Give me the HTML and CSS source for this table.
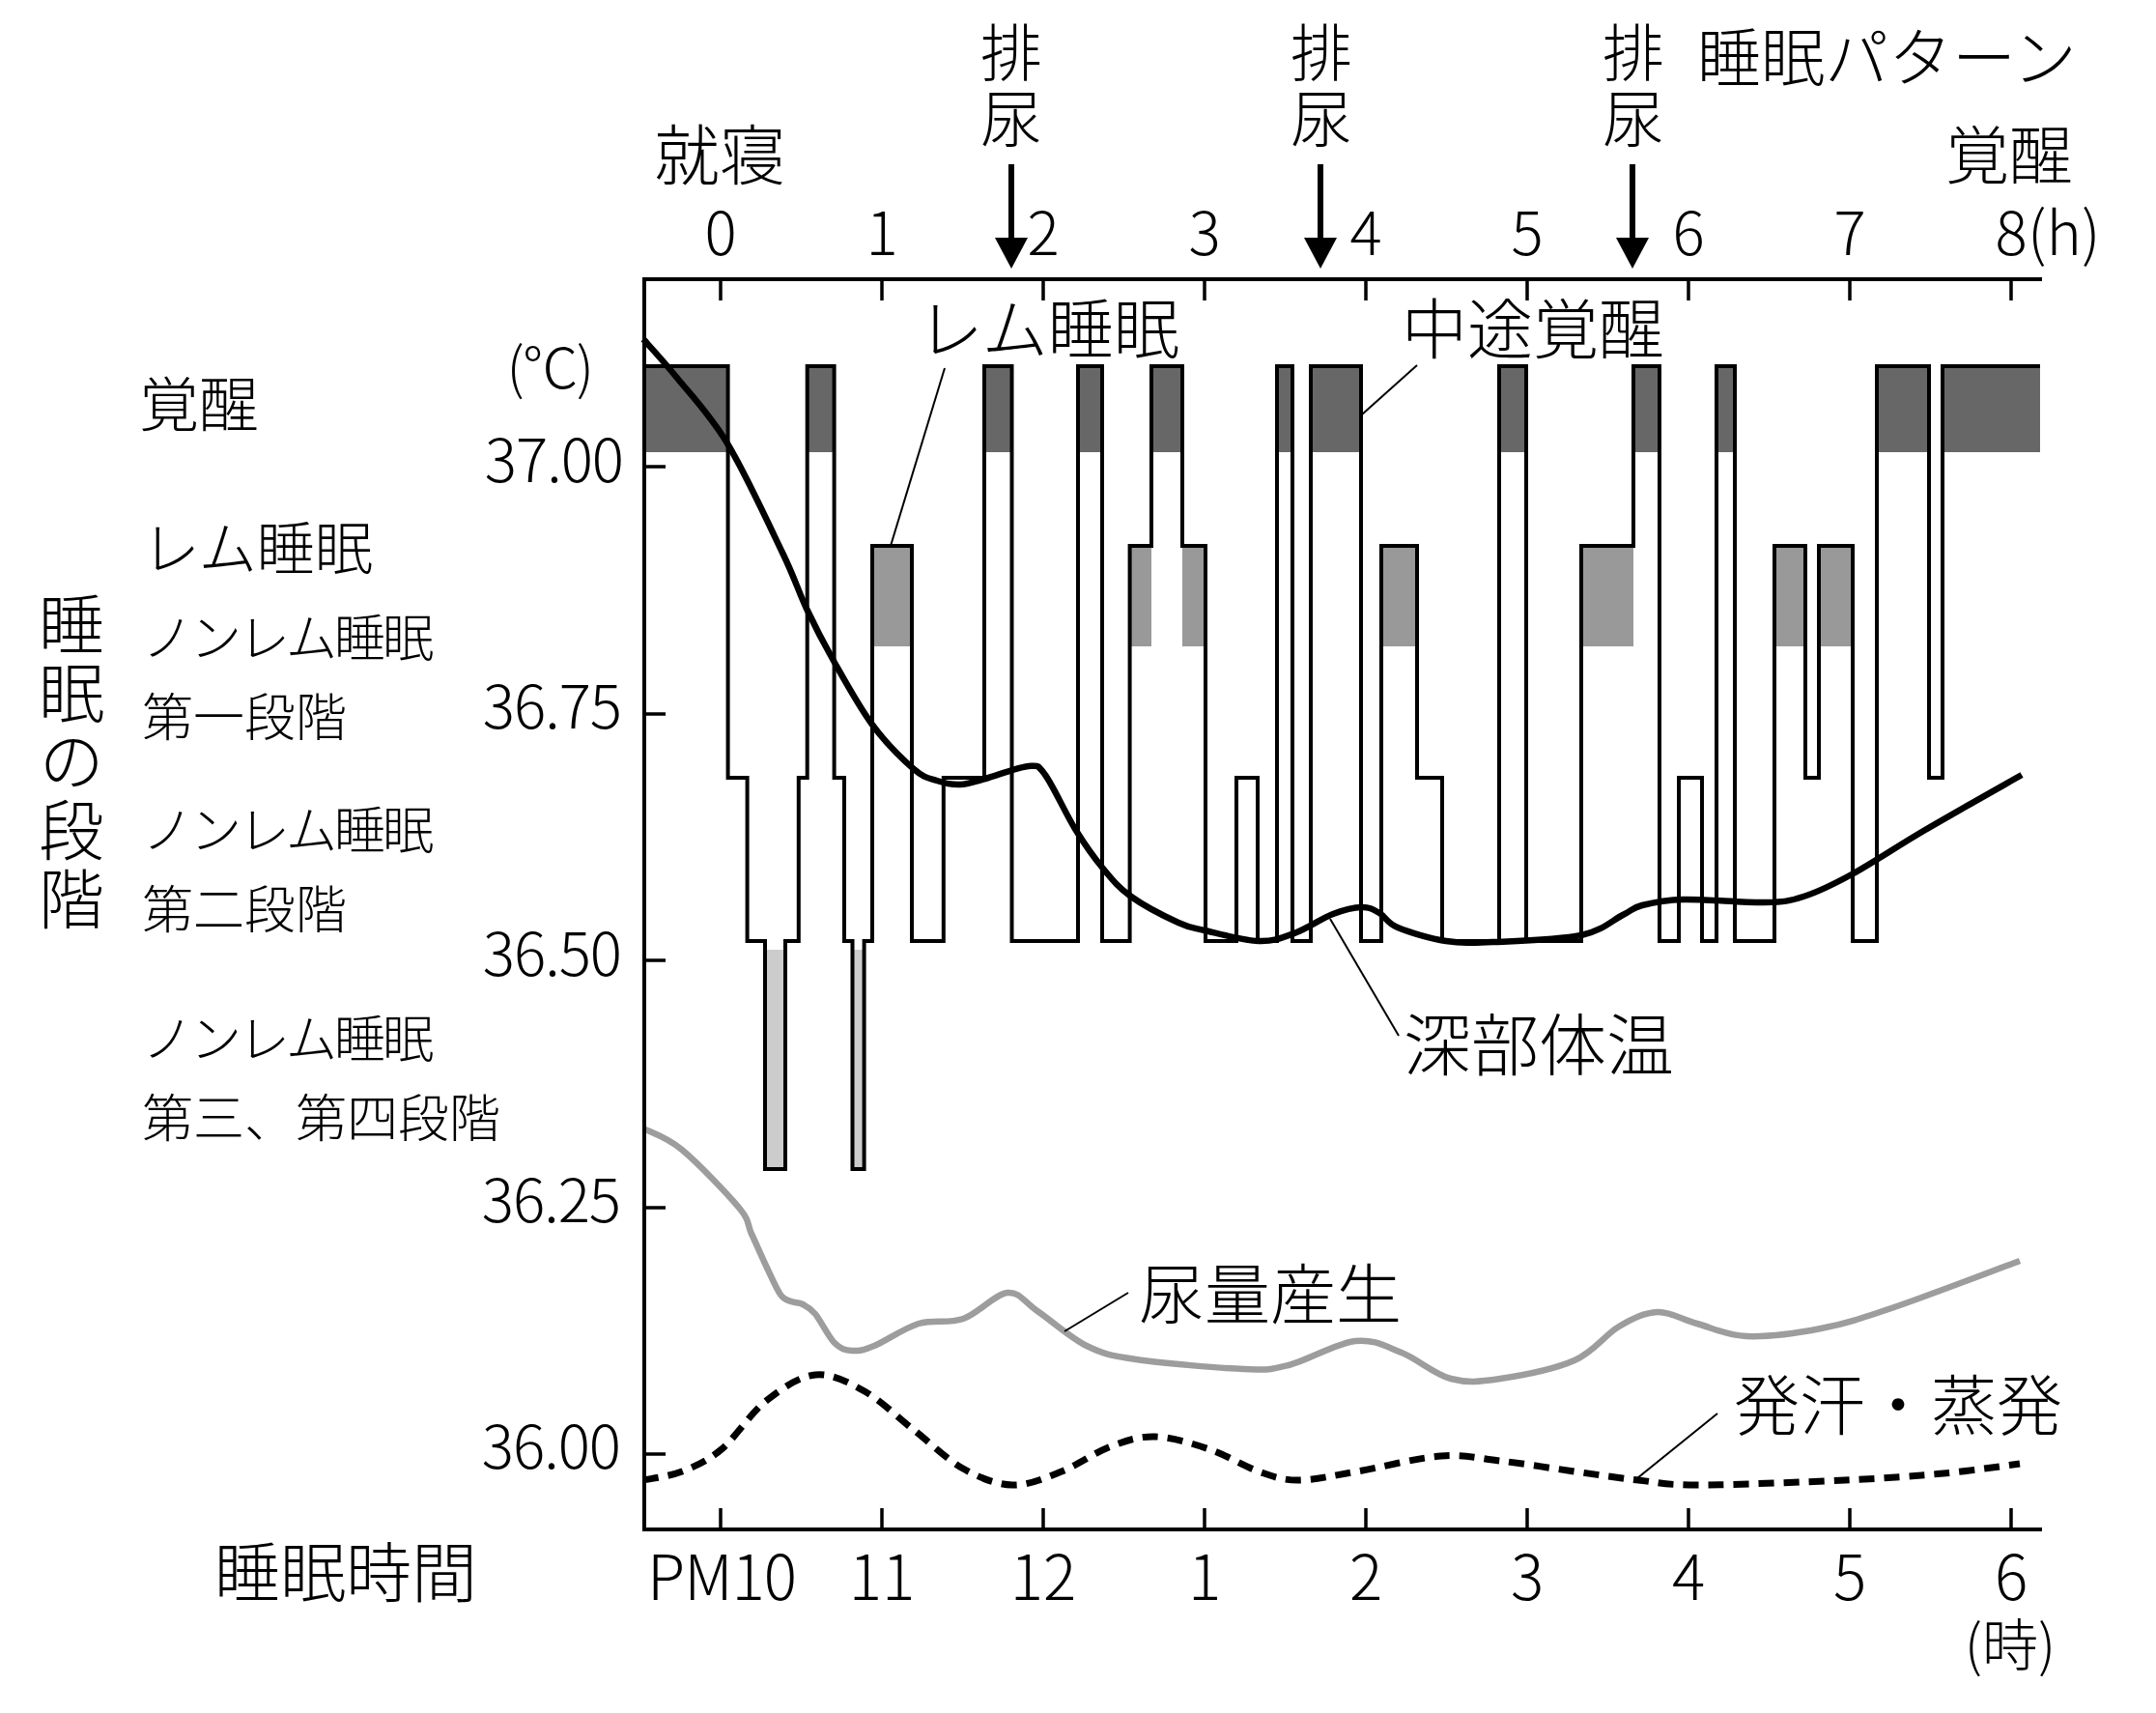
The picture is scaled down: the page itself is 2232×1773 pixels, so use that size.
FILE: index.html
```html
<!DOCTYPE html>
<html lang="ja">
<head>
<meta charset="utf-8">
<title>睡眠パターンと深部体温</title>
<link rel="stylesheet" href="styles.css">
</head>
<body>
<svg class="chart" viewBox="0 0 2232 1773" xmlns="http://www.w3.org/2000/svg">
  <!-- hypnogram fills (generated) -->
  <g id="hyp-fills"></g>
  <path id="hyp-line" class="hyp" d=""></path>

  <!-- curves -->
  <path id="c-urine" class="c-urine" d=""></path>
  <path id="c-sweat" class="c-sweat" d=""></path>
  <path id="c-temp" class="c-temp" d=""></path>

  <!-- axes -->
  <path class="axis" d="M667 1583 V289 H2112"></path>
  <path class="axis" d="M667 1583 H2112"></path>
  <g class="tick">
    <path d="M746 289 V311 M913 289 V311 M1080 289 V311 M1247 289 V311 M1414 289 V311 M1581 289 V311 M1748 289 V311 M1915 289 V311 M2082 289 V311"></path>
    <path d="M746 1583 V1561 M913 1583 V1561 M1080 1583 V1561 M1247 1583 V1561 M1414 1583 V1561 M1581 1583 V1561 M1748 1583 V1561 M1915 1583 V1561 M2082 1583 V1561"></path>
    <path d="M667 483 H689 M667 739 H689 M667 994 H689 M667 1250 H689 M667 1505 H689"></path>
  </g>

  <!-- leaders -->
  <g class="leader">
    <line x1="922" y1="565" x2="978" y2="381"></line>
    <line x1="1410" y1="429" x2="1467" y2="378"></line>
    <line x1="1377" y1="951" x2="1448" y2="1072"></line>
    <line x1="1102" y1="1378" x2="1168" y2="1338"></line>
    <line x1="1695" y1="1530" x2="1778" y2="1463"></line>
  </g>

  <!-- urination arrows -->
  <g>
    <line class="arrow-shaft" x1="1047" y1="170" x2="1047" y2="250"></line>
    <polygon class="arrow-head" points="1030,246 1064,246 1047,278"></polygon>
    <line class="arrow-shaft" x1="1367" y1="170" x2="1367" y2="250"></line>
    <polygon class="arrow-head" points="1350,246 1384,246 1367,278"></polygon>
    <line class="arrow-shaft" x1="1690" y1="170" x2="1690" y2="250"></line>
    <polygon class="arrow-head" points="1673,246 1707,246 1690,278"></polygon>
  </g>

  <!-- top labels -->
  <text class="lbl s64 vert2" x="1047" y="22">排尿</text>
  <text class="lbl s64 vert2" x="1368" y="22">排尿</text>
  <text class="lbl s64 vert2" x="1691" y="22">排尿</text>
  <text class="lbl s66" x="1757" y="84">睡眠パターン</text>
  <text class="lbl s68 mid" x="745" y="186">就寝</text>
  <text class="lbl s66" x="2014" y="185">覚醒</text>

  <text class="lbl s62 mid" x="746" y="264">0</text>
  <text class="lbl s62 mid" x="913" y="264">1</text>
  <text class="lbl s62 mid" x="1080" y="264">2</text>
  <text class="lbl s62 mid" x="1247" y="264">3</text>
  <text class="lbl s62 mid" x="1414" y="264">4</text>
  <text class="lbl s62 mid" x="1581" y="264">5</text>
  <text class="lbl s62 mid" x="1748" y="264">6</text>
  <text class="lbl s62 mid" x="1915" y="264">7</text>
  <text class="lbl s62 mid" x="2082" y="264">8</text>
  <text class="lbl s62" x="2099" y="264">(h)</text>

  <!-- in-plot labels -->
  <text class="lbl s68" x="950" y="366">レム睡眠</text>
  <text class="lbl s68" x="1451" y="366">中途覚醒</text>
  <text class="lbl s70" x="1453" y="1108">深部体温</text>
  <text class="lbl s68" x="1179" y="1365">尿量産生</text>
  <text class="lbl s68" x="1795" y="1480">発汗・蒸発</text>

  <!-- y axis labels -->
  <text class="lbl s58 end unit" x="613" y="402">(℃)</text>
  <text class="lbl s62 end num" x="645" y="499">37.00</text>
  <text class="lbl s62 end num" x="643" y="754">36.75</text>
  <text class="lbl s62 end num" x="643" y="1010">36.50</text>
  <text class="lbl s62 end num" x="642" y="1265">36.25</text>
  <text class="lbl s62 end num" x="642" y="1520">36.00</text>

  <!-- stage labels -->
  <text class="lbl s62" x="144" y="442">覚醒</text>
  <text class="lbl s60" x="147" y="590">レム睡眠</text>
  <text class="lbl s53 kana" x="147" y="680">ノンレム睡眠</text>
  <text class="lbl s53" x="147" y="762">第一段階</text>
  <text class="lbl s53 kana" x="147" y="879">ノンレム睡眠</text>
  <text class="lbl s53" x="147" y="961">第二段階</text>
  <text class="lbl s53 kana" x="147" y="1095">ノンレム睡眠</text>
  <text class="lbl s53" x="147" y="1177">第三、第四段階</text>

  <text class="lbl s68 vert" x="74" y="612">睡眠の段階</text>

  <!-- bottom labels -->
  <text class="lbl s68" x="222" y="1653">睡眠時間</text>
  <text class="lbl s64 mid num" x="747" y="1656">PM10</text>
  <text class="lbl s64 mid" x="913" y="1656">11</text>
  <text class="lbl s64 mid" x="1080" y="1656">12</text>
  <text class="lbl s64 mid" x="1247" y="1656">1</text>
  <text class="lbl s64 mid" x="1414" y="1656">2</text>
  <text class="lbl s64 mid" x="1581" y="1656">3</text>
  <text class="lbl s64 mid" x="1748" y="1656">4</text>
  <text class="lbl s64 mid" x="1915" y="1656">5</text>
  <text class="lbl s64 mid" x="2082" y="1656">6</text>
  <text class="lbl s58 mid" x="2081" y="1724">(時)</text>
</svg>
<script src="script.js"></script>
</body>
</html>
```

FILE: styles.css
```css
html, body {
  margin: 0;
  padding: 0;
  background: #ffffff;
}

.chart {
  display: block;
  width: 2232px;
  height: 1773px;
}

.lbl {
  font-family: "Noto Sans CJK JP", "Noto Sans", sans-serif;
  font-weight: 300;
  fill: #000000;
}

.mid { text-anchor: middle; }
.end { text-anchor: end; }

.vert {
  writing-mode: vertical-rl;
  text-orientation: upright;
  letter-spacing: 3px;
}

.vert2 {
  writing-mode: vertical-rl;
  text-orientation: upright;
  letter-spacing: 5px;
}

.s53 { font-size: 53px; }
.s58 { font-size: 58px; }
.s60 { font-size: 60px; }
.s62 { font-size: 62px; }
.s64 { font-size: 64px; }
.s66 { font-size: 66px; }
.s68 { font-size: 68px; }
.s70 { font-size: 70px; }

.num { letter-spacing: -1px; }
.unit { letter-spacing: -2px; }
.kana { letter-spacing: -3px; }

.axis {
  fill: none;
  stroke: #000000;
  stroke-width: 4;
  stroke-linecap: square;
}

.tick path {
  fill: none;
  stroke: #000000;
  stroke-width: 3.5;
}

.hyp {
  fill: none;
  stroke: #000000;
  stroke-width: 4;
  stroke-linejoin: miter;
}

.f-wake { fill: #676767; }
.f-rem { fill: #999999; }
.f-deep { fill: #cccccc; }

.c-temp {
  fill: none;
  stroke: #000000;
  stroke-width: 6.5;
  stroke-linecap: butt;
}

.c-urine {
  fill: none;
  stroke: #9d9d9d;
  stroke-width: 6.5;
}

.c-sweat {
  fill: none;
  stroke: #000000;
  stroke-width: 7;
  stroke-dasharray: 16 10;
}

.leader line {
  stroke: #000000;
  stroke-width: 2;
}

.arrow-shaft {
  stroke: #000000;
  stroke-width: 6;
}

.arrow-head { fill: #000000; }
```

FILE: script.js
```js
(function () {
  var NS = 'http://www.w3.org/2000/svg';
  var LV = { A: 379, R: 565, S1: 805, S2: 974, S34: 1210 };
  var FILL = {
    A: { cls: 'f-wake', y1: 379, y2: 468 },
    R: { cls: 'f-rem', y1: 565, y2: 669 },
    S34: { cls: 'f-deep', y1: 983, y2: 1210 }
  };
  var segs = [
    [667, 'A'], [753.6, 'S1'], [773.6, 'S2'], [792, 'S34'], [813, 'S2'], [826.8, 'S1'],
    [835.7, 'A'], [863.6, 'S1'], [874, 'S2'], [882.5, 'S34'], [894.6, 'S2'], [903, 'R'],
    [944, 'S2'], [976.8, 'S1'], [1019, 'A'], [1047.5, 'S2'], [1116, 'A'], [1141, 'S2'],
    [1169.6, 'R'], [1192, 'A'], [1224, 'R'], [1248, 'S2'], [1280, 'S1'], [1302, 'S2'],
    [1322, 'A'], [1338, 'S2'], [1357, 'A'], [1409, 'S2'], [1430, 'R'], [1467, 'S1'],
    [1493, 'S2'], [1552, 'A'], [1580, 'S2'], [1637, 'R'], [1691, 'A'], [1718, 'S2'],
    [1738, 'S1'], [1762, 'S2'], [1777, 'A'], [1796, 'S2'], [1837, 'R'], [1869, 'S1'],
    [1883, 'R'], [1918, 'S2'], [1943, 'A'], [1997, 'S1'], [2011, 'A']
  ];
  var END = 2112;
  var fills = document.getElementById('hyp-fills');
  var d = '';
  for (var i = 0; i < segs.length; i++) {
    var x1 = segs[i][0];
    var x2 = i + 1 < segs.length ? segs[i + 1][0] : END;
    var lv = segs[i][1];
    var y = LV[lv];
    if (i === 0) { d = 'M' + x1 + ' ' + y; } else { d += ' V' + y; }
    d += ' H' + x2;
    var f = FILL[lv];
    if (f) {
      var r = document.createElementNS(NS, 'rect');
      r.setAttribute('x', x1);
      r.setAttribute('y', f.y1);
      r.setAttribute('width', x2 - x1);
      r.setAttribute('height', f.y2 - f.y1);
      r.setAttribute('class', f.cls);
      fills.appendChild(r);
    }
  }
  document.getElementById('hyp-line').setAttribute('d', d);

  function smooth(p) {
    var s = 'M' + p[0][0] + ' ' + p[0][1];
    for (var i = 0; i < p.length - 1; i++) {
      var p0 = p[i === 0 ? 0 : i - 1], p1 = p[i], p2 = p[i + 1], p3 = p[i + 2 < p.length ? i + 2 : i + 1];
      var c1x = p1[0] + (p2[0] - p0[0]) / 6, c1y = p1[1] + (p2[1] - p0[1]) / 6;
      var c2x = p2[0] - (p3[0] - p1[0]) / 6, c2y = p2[1] - (p3[1] - p1[1]) / 6;
      s += ' C' + c1x.toFixed(1) + ' ' + c1y.toFixed(1) + ' ' + c2x.toFixed(1) + ' ' + c2y.toFixed(1) + ' ' + p2[0] + ' ' + p2[1];
    }
    return s;
  }

  var temp = [
    [666, 351], [700, 390], [753, 459], [810, 572], [835, 630], [863, 684], [903, 750],
    [946, 796], [970, 808], [994, 812], [1020, 806], [1065, 793], [1082, 802], [1113, 858],
    [1142, 899], [1171, 928], [1220, 955], [1247, 963], [1303, 974], [1340, 966], [1380, 946],
    [1410, 939], [1428, 945], [1447, 960], [1497, 974], [1547, 975], [1637, 968], [1680, 947],
    [1700, 937], [1743, 931], [1827, 934], [1867, 928], [1917, 905], [1993, 859], [2093, 802]
  ];
  var urine = [
    [666, 1168], [706, 1190], [765, 1250], [778, 1277], [793, 1310], [808, 1340], [819, 1347],
    [831, 1350], [844, 1360], [864, 1390], [882, 1398], [905, 1393], [951, 1370], [997, 1365],
    [1043, 1338], [1074, 1357], [1125, 1393], [1176, 1407], [1288, 1417], [1334, 1413],
    [1403, 1388], [1451, 1400], [1502, 1427], [1553, 1427], [1630, 1408], [1676, 1373],
    [1716, 1358], [1757, 1370], [1808, 1383], [1885, 1375], [1961, 1353], [2091, 1305]
  ];
  var sweat = [
    [666, 1532], [706, 1523], [747, 1500], [793, 1450], [844, 1423], [895, 1440], [946, 1480],
    [997, 1520], [1048, 1537], [1099, 1523], [1150, 1497], [1196, 1487], [1252, 1500],
    [1303, 1523], [1344, 1532], [1405, 1523], [1492, 1507], [1553, 1512], [1630, 1523],
    [1696, 1532], [1757, 1537], [1910, 1532], [2012, 1525], [2091, 1515]
  ];
  document.getElementById('c-temp').setAttribute('d', smooth(temp));
  document.getElementById('c-urine').setAttribute('d', smooth(urine));
  document.getElementById('c-sweat').setAttribute('d', smooth(sweat));
})();
```
